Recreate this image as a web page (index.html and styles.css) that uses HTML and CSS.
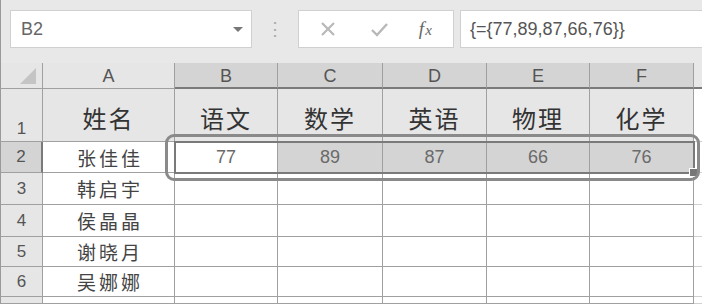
FILE: index.html
```html
<!DOCTYPE html>
<html lang="zh-CN">
<head>
    <meta charset="UTF-8">
    <title>成绩表</title>
    <link rel="stylesheet" href="styles.css">
</head>
<body>
    <div class="toolbar">
        <div class="name-box">
            <span>B2</span>
            <span class="caret"></span>
        </div>
        <div class="dots">⋮</div>
        <div class="fn-buttons">
            <svg class="btn" width="20" height="20" viewBox="0 0 20 20"><path d="M4 4 L16 16 M16 4 L4 16" stroke="#b8b8b8" stroke-width="2.2" fill="none"/></svg>
            <svg class="btn" width="20" height="20" viewBox="0 0 20 20"><path d="M3 11 L8 16 L18 5" stroke="#b8b8b8" stroke-width="2.4" fill="none"/></svg>
            <span class="fx">f<span class="x">x</span></span>
        </div>
        <div class="formula">{={77,89,87,66,76}}</div>
    </div>

    <div class="sheet">
        <div class="grid">
            <div class="corner"><span class="tri"></span></div>
            <div class="col-head">A</div>
            <div class="col-head sel">B</div>
            <div class="col-head sel">C</div>
            <div class="col-head sel">D</div>
            <div class="col-head sel">E</div>
            <div class="col-head sel">F</div>
            <div class="pad-head"></div>

            <div class="row-head tall">1</div>
            <div class="cell title">姓名</div>
            <div class="cell title">语文</div>
            <div class="cell title">数学</div>
            <div class="cell title">英语</div>
            <div class="cell title">物理</div>
            <div class="cell title">化学</div>
            <div class="pad"></div>

            <div class="row-head sel">2</div>
            <div class="cell name">张佳佳</div>
            <div class="cell num active">77</div>
            <div class="cell num picked">89</div>
            <div class="cell num picked">87</div>
            <div class="cell num picked">66</div>
            <div class="cell num picked">76</div>
            <div class="pad"></div>

            <div class="row-head">3</div>
            <div class="cell name">韩启宇</div>
            <div class="cell"></div><div class="cell"></div><div class="cell"></div><div class="cell"></div><div class="cell"></div>
            <div class="pad"></div>

            <div class="row-head">4</div>
            <div class="cell name">侯晶晶</div>
            <div class="cell"></div><div class="cell"></div><div class="cell"></div><div class="cell"></div><div class="cell"></div>
            <div class="pad"></div>

            <div class="row-head">5</div>
            <div class="cell name">谢晓月</div>
            <div class="cell"></div><div class="cell"></div><div class="cell"></div><div class="cell"></div><div class="cell"></div>
            <div class="pad"></div>

            <div class="row-head">6</div>
            <div class="cell name">吴娜娜</div>
            <div class="cell"></div><div class="cell"></div><div class="cell"></div><div class="cell"></div><div class="cell"></div>
            <div class="pad"></div>

            <div class="row-head"></div>
            <div class="cell"></div><div class="cell"></div><div class="cell"></div><div class="cell"></div><div class="cell"></div><div class="cell"></div>
            <div class="pad"></div>
        </div>

        <!-- selection border of B2:F2 and the hand-drawn mark round it -->
        <div class="selection"><span class="handle"></span></div>
        <div class="mark"></div>
    </div>
</body>
</html>
```

FILE: styles.css
```css
body {
    margin: 0;
    width: 702px;
    height: 304px;
    overflow: hidden;
    background: #e8e8e8;
    font-family: "Liberation Sans", "Noto Sans CJK SC", sans-serif;
    color: #555;
}
.toolbar {
    height: 63px;
    box-sizing: border-box;
    padding-top: 10px;
    display: flex;
    align-items: flex-start;
    background: #e8e8e8;
    border-left: 1px solid #9a9a9a;
}
.name-box {
    margin-left: 9px;
    width: 242px;
    height: 38px;
    box-sizing: border-box;
    background: #fff;
    border: 1px solid #d0d0d0;
    display: flex;
    align-items: center;
    justify-content: space-between;
    padding: 0 8px 0 10px;
    font-size: 18px;
    color: #666;
}
.caret {
    width: 0;
    height: 0;
    border-left: 5px solid transparent;
    border-right: 5px solid transparent;
    border-top: 5px solid #777;
}
.dots {
    width: 46px;
    height: 38px;
    display: flex;
    align-items: center;
    justify-content: center;
    color: #aaa;
    font-size: 18px;
}
.fn-buttons {
    width: 156px;
    height: 38px;
    box-sizing: border-box;
    background: #fff;
    border: 1px solid #d0d0d0;
    display: flex;
    align-items: center;
    justify-content: space-around;
    padding: 0 6px 0 4px;
}
.fx {
    font-family: "Liberation Serif", serif;
    font-style: italic;
    font-size: 19px;
    color: #666;
}
.fx .x {
    font-size: 15px;
    margin-left: 1px;
}
.formula {
    margin-left: 6px;
    flex: 1;
    height: 38px;
    box-sizing: border-box;
    background: #fff;
    border: 1px solid #d0d0d0;
    border-right: none;
    display: flex;
    align-items: center;
    padding-left: 9px;
    font-size: 18px;
    color: #555;
}
.sheet {
    position: relative;
}
.grid {
    display: grid;
    grid-template-columns: 43px 132px 103px 105px 104px 103px 104px 8px;
    grid-template-rows: 26px 53px 31px 32px 32px 30px 30px 7px;
    background: #fff;
}
.grid > div {
    box-sizing: border-box;
    border-right: 1px solid #a0a0a0;
    border-bottom: 1px solid #a0a0a0;
}
.corner {
    background: #e6e6e6;
    border-left: 1px solid #9a9a9a;
    position: relative;
}
.tri {
    position: absolute;
    right: 6px;
    bottom: 4px;
    width: 0;
    height: 0;
    border-left: 16px solid transparent;
    border-bottom: 16px solid #c4c4c4;
}
.col-head {
    background: #e6e6e6;
    display: flex;
    align-items: center;
    justify-content: center;
    font-size: 18px;
    color: #555;
    padding-top: 2px;
}
.col-head.sel {
    background: #d4d4d4;
    border-bottom: 2px solid #7a7a7a !important;
}
.grid > .pad-head {
    background: #e8e8e8;
    border-right: none;
    border-bottom: 2px solid #7a7a7a;
}
.grid > .pad {
    background: #fff;
    border-right: none;
    border-bottom-color: #d0d0d0;
}
.row-head {
    background: #e6e6e6;
    border-left: 1px solid #9a9a9a;
    display: flex;
    align-items: center;
    justify-content: center;
    font-size: 17px;
    color: #555;
}
.row-head.tall {
    align-items: flex-end;
    padding-bottom: 2px;
}
.row-head.sel {
    background: #d4d4d4;
    border-right: 2px solid #7a7a7a !important;
}
.cell {
    display: flex;
    align-items: center;
    justify-content: center;
}
.title {
    background: #e6e6e6;
    font-family: "Noto Sans CJK SC", sans-serif;
    font-size: 24px;
    letter-spacing: 2px;
    color: #333;
    padding-top: 5px;
}
.name {
    font-family: "Noto Sans CJK SC", sans-serif;
    font-size: 19px;
    letter-spacing: 3px;
    padding-left: 3px;
    color: #444;
}
.num {
    font-size: 18px;
    color: #6a6a6a;
}
.picked {
    background: #d4d4d4;
}
.selection {
    position: absolute;
    left: 174px;
    top: 78px;
    width: 521px;
    height: 33px;
    box-sizing: border-box;
    border: 2px solid #7a7a7a;
}
.handle {
    position: absolute;
    right: -5px;
    bottom: -5px;
    width: 7px;
    height: 7px;
    background: #777;
    border: 1px solid #fff;
}
.mark {
    position: absolute;
    left: 165px;
    top: 71px;
    width: 535px;
    height: 47px;
    box-sizing: border-box;
    border: 3px solid #8a8a8a;
    border-radius: 9px;
}
```
